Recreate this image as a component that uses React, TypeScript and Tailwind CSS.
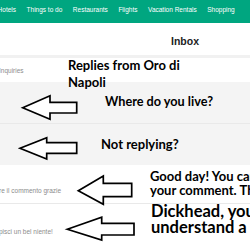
import React from 'react';

const navItems = ['Hotels', 'Things to do', 'Restaurants', 'Flights', 'Vacation Rentals', 'Shopping'];

const arrows = [
    '22.7,107.7 50,95.7 50,102.3 76.7,102.3 76.7,113 50,113 50,119.3',
    '20,148.3 46.7,137.7 46.7,142.7 76.7,142.7 76.7,153.3 46.7,153.3 46.7,159',
    '78.3,190.7 103.3,176 103.3,183.3 131.7,183.3 131.7,196.7 103.3,196.7 103.3,204.3',
    '67.3,229.3 101.7,217.3 101.7,223.3 134,223.3 134,235 101.7,235 101.7,240',
];

const App: React.FC = () => {
    return (
        <div className="relative w-[250px] h-[250px] overflow-hidden bg-white font-['Liberation_Sans',Arial,sans-serif]">
            {/* top nav */}
            <nav className="h-[23px] bg-[#00a680] flex gap-[10.5px] -ml-[2.4px] pt-[6px] text-[6.5px] leading-[8px] text-white whitespace-nowrap">
                {navItems.map((item) => (
                    <span key={item}>{item}</span>
                ))}
            </nav>

            <div className="h-[32px] pl-[171px] pt-[12px]">
                <h2 className="text-[10.5px] leading-[12px] font-bold text-[#222]">Inbox</h2>
            </div>

            <div className="h-[3px] bg-[#f1f1f1]" />

            {/* message list */}
            <div className="text-[6.5px] leading-[8px] text-[#8c8c8c] whitespace-nowrap">
                <div className="h-[24px] flex items-center pt-[2px] -ml-[1px]">Inquiries</div>
                <div className="h-[42px] bg-[#f4f4f4] border-b border-[#e9e9e9]" />
                <div className="h-[41px] bg-[#f4f4f4]" />
                <div className="h-[39px] border-b border-[#e9e9e9] flex items-end pb-[8px] -ml-[1px]">
                    re il commento grazie
                </div>
                <div className="h-[46px] pt-[24px] -ml-[1px]">pisci un bel niente!</div>
            </div>

            {/* pasted annotations */}
            <svg className="absolute inset-0" width="250" height="250" viewBox="0 0 250 250">
                {arrows.map((pts) => (
                    <polygon key={pts} points={pts} fill="white" stroke="black" strokeWidth="1.7" strokeLinejoin="miter" />
                ))}
            </svg>

            <div className="absolute inset-0 font-['Lato',sans-serif] font-bold text-black whitespace-nowrap">
                <div className="absolute left-[68px] top-[57px] text-[13px] leading-[17px]">
                    Replies from Oro di
                    <br />
                    Napoli
                </div>
                <div className="absolute left-[105px] top-[94px] text-[12.7px] leading-[14px]">Where do you live?</div>
                <div className="absolute left-[101px] top-[137px] text-[13px] leading-[14px]">Not replying?</div>
                <div className="absolute left-[150px] top-[170px] text-[13px] leading-[13.5px]">
                    Good day! You can
                    <br />
                    your comment. Thank
                </div>
                <div className="absolute left-[151px] top-[203px] text-[16.5px] leading-[16px]">
                    Dickhead, you
                    <br />
                    understand a thing
                </div>
            </div>
        </div>
    );
};

export default App;
